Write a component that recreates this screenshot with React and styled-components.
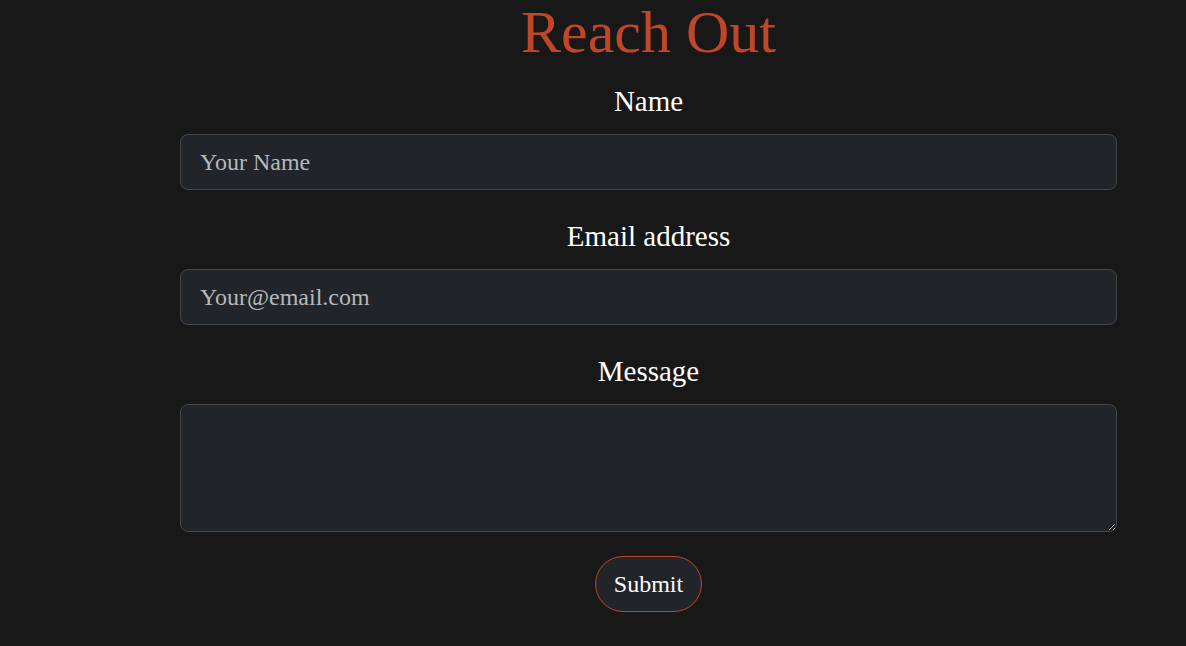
import React, { useState } from "react";
import styled, { createGlobalStyle } from "styled-components";

const GlobalStyle = createGlobalStyle`
  html, body {
    margin: 0;
    padding: 0;
    background-color: #181818;
    color-scheme: dark;
  }
  body {
    font-family: "Liberation Serif", "Times New Roman", serif;
    color: #fff;
  }
`;

const Page = styled.div`
  min-height: 646px;
  padding: 2px 69px 0 180px;
  box-sizing: border-box;
`;

const Title = styled.h1`
  margin: 0 0 23px;
  text-align: center;
  font-size: 60px;
  line-height: 60px;
  font-weight: 400;
  color: #c0462a;
`;

const Form = styled.form`
  display: flex;
  flex-direction: column;
`;

const FormGroup = styled.div`
  display: flex;
  flex-direction: column;
  margin-bottom: ${(p) => p.$spacing || 30}px;
`;

const Label = styled.label`
  display: block;
  text-align: center;
  font-size: 29px;
  line-height: 33px;
  margin-bottom: 16px;
  color: #fff;
`;

const fieldStyles = `
  width: 100%;
  box-sizing: border-box;
  background-color: #212529;
  border: 1px solid #43474b;
  border-radius: 8px;
  color: #dee2e6;
  font-family: "Liberation Serif", "Times New Roman", serif;
  font-size: 24px;
  padding: 0 19px;
  outline: none;

  &::placeholder {
    color: #b4b8bc;
  }
`;

const Input = styled.input`
  ${fieldStyles}
  height: 56px;
`;

const TextArea = styled.textarea`
  ${fieldStyles}
  height: 128px;
  padding: 12px 19px;
  resize: vertical;
  display: block;
`;

const SubmitButton = styled.button`
  align-self: center;
  height: 56px;
  padding: 0 18px;
  background-color: #212529;
  color: #fff;
  border: 1px solid #c0462a;
  border-radius: 28px;
  font-family: "Liberation Serif", "Times New Roman", serif;
  font-size: 24px;
  cursor: pointer;
`;

const App = () => {
  const [formData, setFormData] = useState({ name: "", email: "", message: "" });

  const handleInputChange = (e) => {
    const { name, value } = e.target;
    setFormData({ ...formData, [name]: value });
  };

  const handleSubmit = (e) => {
    e.preventDefault();
  };

  return (
    <>
      <GlobalStyle />
      <Page>
        <Title>Reach Out</Title>
        <Form onSubmit={handleSubmit}>
          <FormGroup>
            <Label htmlFor="name">Name</Label>
            <Input
              type="text"
              id="name"
              name="name"
              placeholder="Your Name"
              value={formData.name}
              onChange={handleInputChange}
            />
          </FormGroup>
          <FormGroup>
            <Label htmlFor="email">Email address</Label>
            <Input
              type="email"
              id="email"
              name="email"
              placeholder="Your@email.com"
              value={formData.email}
              onChange={handleInputChange}
            />
          </FormGroup>
          <FormGroup $spacing={24}>
            <Label htmlFor="message">Message</Label>
            <TextArea
              id="message"
              name="message"
              rows={3}
              value={formData.message}
              onChange={handleInputChange}
            />
          </FormGroup>
          <SubmitButton type="submit">Submit</SubmitButton>
        </Form>
      </Page>
    </>
  );
};

export default App;
